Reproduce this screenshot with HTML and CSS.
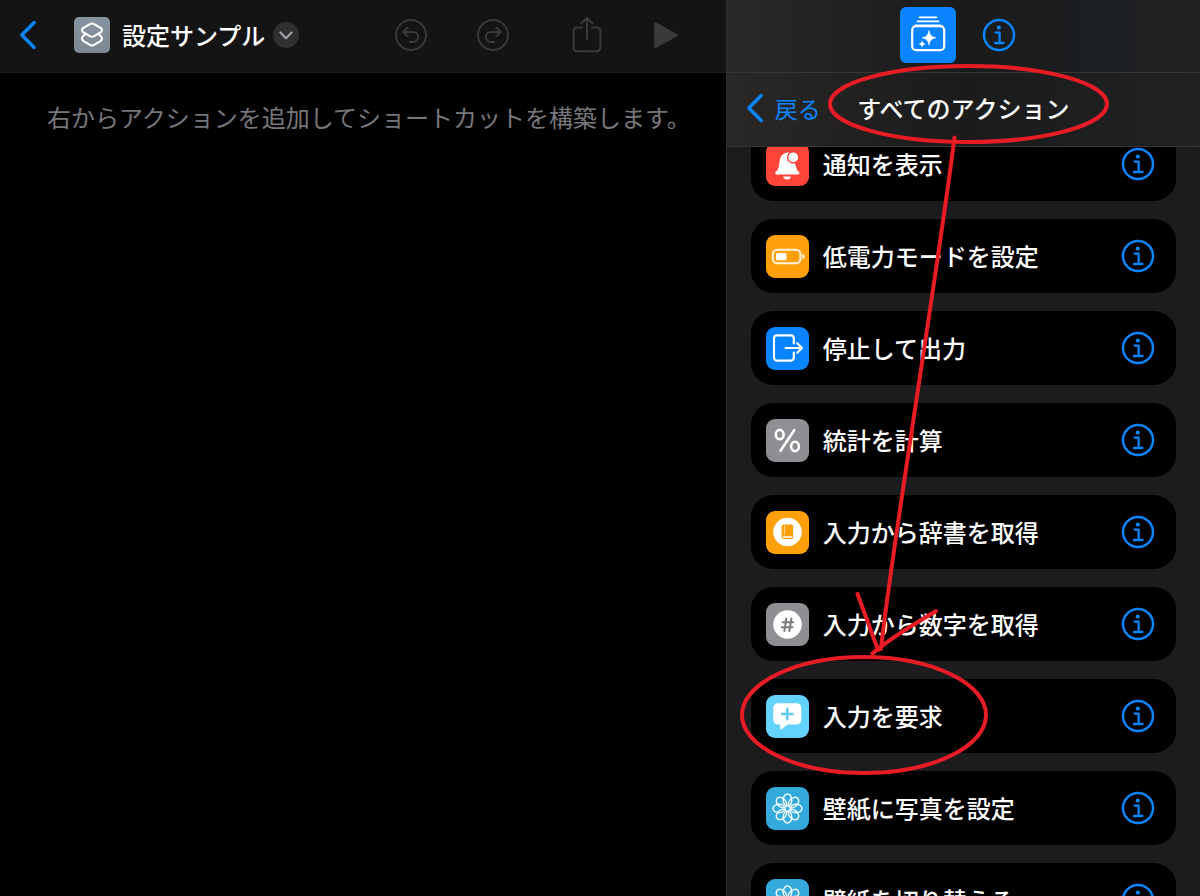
FILE: index.html
```html
<!DOCTYPE html>
<html lang="ja">
<head>
    <meta charset="utf-8">
    <meta name="viewport" content="width=device-width, initial-scale=1">
    <title>設定サンプル</title>
    <link rel="stylesheet" href="styles.css">
</head>
<body>
    <!-- Shared icons -->
    <svg class="sprite" aria-hidden="true">
        <symbol id="icon-info" viewBox="0 0 34 34">
            <circle cx="17" cy="17" r="15" fill="none" stroke="currentColor" stroke-width="2.5"/>
            <circle cx="16.8" cy="9.6" r="2.1" fill="currentColor"/>
            <path d="M13.6 14.6h4v10M12.9 25h8.6" fill="none" stroke="currentColor" stroke-width="2.3" stroke-linecap="round" stroke-linejoin="round"/>
        </symbol>
        <symbol id="icon-back" viewBox="0 0 18 30">
            <path d="M15.2 2.5L2.8 15l12.4 12.5" fill="none" stroke="currentColor" stroke-width="3.4" stroke-linecap="round" stroke-linejoin="round"/>
        </symbol>
        <symbol id="icon-flower" viewBox="0 0 43 43">
            <g fill="none" stroke="#eefaff" stroke-width="1.4">
                <ellipse cx="21.5" cy="13" rx="4.3" ry="6"/>
                <ellipse cx="21.5" cy="13" rx="4.3" ry="6" transform="rotate(45 21.5 21.5)"/>
                <ellipse cx="21.5" cy="13" rx="4.3" ry="6" transform="rotate(90 21.5 21.5)"/>
                <ellipse cx="21.5" cy="13" rx="4.3" ry="6" transform="rotate(135 21.5 21.5)"/>
                <ellipse cx="21.5" cy="13" rx="4.3" ry="6" transform="rotate(180 21.5 21.5)"/>
                <ellipse cx="21.5" cy="13" rx="4.3" ry="6" transform="rotate(225 21.5 21.5)"/>
                <ellipse cx="21.5" cy="13" rx="4.3" ry="6" transform="rotate(270 21.5 21.5)"/>
                <ellipse cx="21.5" cy="13" rx="4.3" ry="6" transform="rotate(315 21.5 21.5)"/>
            </g>
        </symbol>
    </svg>

    <div class="app">
        <main class="editor">
            <header class="editor-bar">
                <button class="icon-button" aria-label="戻る"><svg class="back-icon"><use href="#icon-back"/></svg></button>
                <span class="app-icon">
                    <svg width="36" height="36" viewBox="0 0 36 36" fill="none" stroke="#fff" stroke-width="2.1" stroke-linejoin="round">
                        <path d="M16.4 6.9Q18 6.200 19.600 6.900L26.600 10.900Q29 12.800 27 15.200L19.600 19.400Q18 20.100 16.400 19.400L9 15.200Q7 12.800 9.400 10.900Z"/>
                        <path d="M11.500 17L9 19.200Q7 21.600 9 23.800L16.400 28.100Q18 29 19.600 28.100L27 23.800Q29 21.600 27 19.200L24.500 17"/>
                    </svg>
                </span>
                <h1 class="shortcut-name">設定サンプル</h1>
                <button class="icon-button" aria-label="名前メニュー">
                    <svg width="26" height="26" viewBox="0 0 26 26">
                        <circle cx="13" cy="13" r="13" fill="#303033"/>
                        <path d="M7.4 10.5l5.6 5.8 5.6-5.8" fill="none" stroke="#a2a2a6" stroke-width="2.2" stroke-linecap="round" stroke-linejoin="round"/>
                    </svg>
                </button>
                <div class="tools">
                    <button class="icon-button" aria-label="取り消す" disabled>
                        <svg width="32" height="36" viewBox="0 0 32 36" fill="none" stroke="currentColor" stroke-width="2" stroke-linecap="round" stroke-linejoin="round">
                            <circle cx="16" cy="18" r="15"/>
                            <path d="M12.6 10.7L8.3 15l4.3 4.3M8.8 15h9.3a4.9 4.9 0 0 1 0 9.900h-3"/>
                        </svg>
                    </button>
                    <button class="icon-button" aria-label="やり直す" disabled>
                        <svg width="32" height="36" viewBox="0 0 32 36" fill="none" stroke="currentColor" stroke-width="2" stroke-linecap="round" stroke-linejoin="round">
                            <circle cx="16" cy="18" r="15"/>
                            <path d="M19.4 10.7l4.3 4.3-4.3 4.3M23.2 15h-9.3a4.9 4.9 0 0 0 0 9.9h3"/>
                        </svg>
                    </button>
                    <button class="icon-button share" aria-label="共有" disabled>
                        <svg width="32" height="36" viewBox="0 0 32 36" fill="none" stroke="currentColor" stroke-width="2" stroke-linecap="round" stroke-linejoin="round">
                            <path d="M11 10.5H6a3.4 3.4 0 0 0-3.4 3.4v16.9a3.4 3.4 0 0 0 3.4 3.4h20a3.4 3.4 0 0 0 3.4-3.4V13.9a3.4 3.4 0 0 0-3.4-3.4h-5M16 22V1M10.5 6.3L16 .9l5.5 5.4"/>
                        </svg>
                    </button>
                    <button class="icon-button" aria-label="実行" disabled>
                        <svg width="26" height="36" viewBox="0 0 26 36"><path d="M3 5.200L24.200 17.200Q25.600 18.200 24.200 19.200L3 31Q1.200 31.500 1.200 29.500V6.700Q1.200 4.500 3 5.200Z" fill="currentColor"/></svg>
                    </button>
                </div>
            </header>
            <p class="hint">右からアクションを追加してショートカットを構築します。</p>
        </main>

        <aside class="library">
            <div class="library-tabs">
                <button class="tab-active" aria-label="アクション">
                    <svg width="56" height="56" viewBox="0 0 56 56" fill="none" stroke="#fff">
                        <path d="M19.5 10.3h17M17.5 14.3h21M15.5 18.3h25" stroke-width="1.7" stroke-linecap="round"/>
                        <rect x="12.2" y="19.2" width="32" height="24" rx="4" stroke-width="2.2"/>
                        <path d="M29 23.5Q29.600 29.900 36 30.800Q29.600 31.700 29 38Q28.400 31.700 22 30.800Q28.400 29.900 29 23.500Z" fill="#fff" stroke="#fff" stroke-width=".6"/>
                        <path d="M22 33Q22.400 36.400 26 37Q22.400 37.600 22 41Q21.600 37.600 18.500 37Q21.600 36.400 22 33Z" fill="#fff" stroke="none"/>
                    </svg>
                </button>
                <button class="icon-button" aria-label="ショートカットの詳細"><svg class="info-icon"><use href="#icon-info"/></svg></button>
            </div>
            <div class="library-header">
                <button class="back-button"><svg class="back-icon"><use href="#icon-back"/></svg>戻る</button>
                <h2 class="library-title">すべてのアクション</h2>
            </div>

            <div class="action-scroll">
                <ul class="action-list">
                    <li class="action">
                        <button class="action-main">
                            <svg class="action-icon red" viewBox="0 0 43 43">
                                <path d="M9 30.300Q9 29 11.500 27Q13 25 13.300 20Q14 10.500 21.200 9.500Q24 9.200 26 10.500L31 27Q33.600 29 33.500 30.300Q33.500 31.400 32 31.400H10.500Q9 31.400 9 30.300Z" fill="#fff"/>
                                <circle cx="27.200" cy="14.400" r="6.300" fill="#ff453a"/>
                                <circle cx="27.200" cy="14.400" r="4.900" fill="#fff"/>
                                <path d="M17 33.400h8.200Q24 36.500 21.100 36.500T17 33.400Z" fill="#fff"/>
                            </svg>
                            通知を表示
                        </button>
                        <button class="icon-button" aria-label="通知を表示の情報"><svg class="info-icon"><use href="#icon-info"/></svg></button>
                    </li>
                    <li class="action">
                        <button class="action-main">
                            <svg class="action-icon orange" viewBox="0 0 43 43">
                                <rect x="6.8" y="14.7" width="27.6" height="13.6" rx="4.5" fill="none" stroke="#fff3dc" stroke-width="2"/>
                                <rect x="10" y="18" width="10.5" height="7.2" rx="1.5" fill="#fff"/>
                                <path d="M36.2 18.7q2.5.7 2.5 2.800t-2.500 2.800z" fill="#fff3dc"/>
                            </svg>
                            低電力モードを設定
                        </button>
                        <button class="icon-button" aria-label="低電力モードを設定の情報"><svg class="info-icon"><use href="#icon-info"/></svg></button>
                    </li>
                    <li class="action">
                        <button class="action-main">
                            <svg class="action-icon blue" viewBox="0 0 43 43" fill="none" stroke="#fff" stroke-width="2.1" stroke-linecap="round" stroke-linejoin="round">
                                <path d="M27.8 16.5V11.4a3 3 0 0 0-3-3H11a3 3 0 0 0-3 3v19.2a3 3 0 0 0 3 3h13.8a3 3 0 0 0 3-3v-5.1M19.6 21h16.3M31.2 16.2l4.8 4.8-4.8 4.8"/>
                            </svg>
                            停止して出力
                        </button>
                        <button class="icon-button" aria-label="停止して出力の情報"><svg class="info-icon"><use href="#icon-info"/></svg></button>
                    </li>
                    <li class="action">
                        <button class="action-main">
                            <svg class="action-icon gray" viewBox="0 0 43 43" fill="none" stroke="#fff" stroke-width="2.6" stroke-linecap="round">
                                <ellipse cx="13.7" cy="15.6" rx="3.9" ry="4.7"/>
                                <ellipse cx="29" cy="27.4" rx="3.9" ry="4.7"/>
                                <path d="M28.2 11.2L14.5 31.7"/>
                            </svg>
                            統計を計算
                        </button>
                        <button class="icon-button" aria-label="統計を計算の情報"><svg class="info-icon"><use href="#icon-info"/></svg></button>
                    </li>
                    <li class="action">
                        <button class="action-main">
                            <svg class="action-icon orange" viewBox="0 0 43 43">
                                <circle cx="21.5" cy="21" r="14.3" fill="#fff"/>
                                <path d="M17.6 13.400h8.200q1.300 0 1.300 1.300v11.800q0 1.500-1.500 1.500h-8q-2 0-2-2V15.400q0-2 2-2z" fill="#ff9f0a"/>
                                <path d="M18.400 14.500v9.500" stroke="#ffe0b0" stroke-width=".9"/>
                                <path d="M17.400 26h8.400" stroke="#fff" stroke-width="1.500" stroke-linecap="round"/>
                            </svg>
                            入力から辞書を取得
                        </button>
                        <button class="icon-button" aria-label="入力から辞書を取得の情報"><svg class="info-icon"><use href="#icon-info"/></svg></button>
                    </li>
                    <li class="action">
                        <button class="action-main">
                            <svg class="action-icon gray" viewBox="0 0 43 43">
                                <circle cx="21.5" cy="21.5" r="14.3" fill="#fff"/>
                                <path d="M20.3 15.5l-2 12.500M25.400 15.500l-2 12.500M16.700 19.300h10.600M15.900 24.300h10.600" fill="none" stroke="#7c7c81" stroke-width="2" stroke-linecap="round"/>
                            </svg>
                            入力から数字を取得
                        </button>
                        <button class="icon-button" aria-label="入力から数字を取得の情報"><svg class="info-icon"><use href="#icon-info"/></svg></button>
                    </li>
                    <li class="action">
                        <button class="action-main">
                            <svg class="action-icon cyan" viewBox="0 0 43 43">
                                <path d="M12 8.2h18.5a4.8 4.8 0 0 1 4.8 4.8v11.8a4.8 4.8 0 0 1-4.8 4.8h-9l-5.8 4.7q-1.5.8-1.5-.9v-3.8H12a4.8 4.8 0 0 1-4.8-4.8V13A4.8 4.8 0 0 1 12 8.2z" fill="#fff"/>
                                <path d="M21.3 13.7v10.6M16 19h10.6" stroke="#5cc9f5" stroke-width="2.4" stroke-linecap="round"/>
                            </svg>
                            入力を要求
                        </button>
                        <button class="icon-button" aria-label="入力を要求の情報"><svg class="info-icon"><use href="#icon-info"/></svg></button>
                    </li>
                    <li class="action">
                        <button class="action-main">
                            <svg class="action-icon sky"><use href="#icon-flower"/></svg>
                            壁紙に写真を設定
                        </button>
                        <button class="icon-button" aria-label="壁紙に写真を設定の情報"><svg class="info-icon"><use href="#icon-info"/></svg></button>
                    </li>
                    <li class="action">
                        <button class="action-main">
                            <svg class="action-icon sky"><use href="#icon-flower"/></svg>
                            壁紙を切り替える
                        </button>
                        <button class="icon-button" aria-label="壁紙を切り替えるの情報"><svg class="info-icon"><use href="#icon-info"/></svg></button>
                    </li>
                </ul>
            </div>

            <!-- Red pen marks over the panel -->
            <svg class="annotation" width="474" height="896" viewBox="726 0 474 896" aria-hidden="true">
                <ellipse cx="968.5" cy="104" rx="138.5" ry="38"/>
                <ellipse cx="864" cy="715" rx="122" ry="58"/>
                <path d="M954.5 137.5C938 270 890 560 881 649M857.5 594L878 650M936 611C915 624 890 638 872.5 653.5"/>
            </svg>
        </aside>
    </div>
</body>
</html>
```

FILE: styles.css
```css
* {
    box-sizing: border-box;
}

body {
    margin: 0;
    background-color: #000;
    color: #fff;
    font-family: "Noto Sans CJK JP", sans-serif;
    font-size: 24px;
    line-height: 36px;
}

h1, h2, p, ul {
    margin: 0;
    padding: 0;
}

button {
    padding: 0;
    border: none;
    background: none;
    color: inherit;
    font: inherit;
    cursor: pointer;
}

svg {
    display: block;
    flex-shrink: 0;
}

.sprite {
    position: absolute;
    width: 0;
    height: 0;
}

.app {
    display: grid;
    grid-template-columns: 153fr 100fr;
    height: 100vh;
    overflow: hidden;
}

.icon-button {
    display: flex;
    color: #0a84ff;
}

.back-icon {
    width: 18px;
    height: 30px;
}

.info-icon {
    width: 34px;
    height: 34px;
}

/* Left side */
.editor {
    min-width: 0;
}

.editor-bar {
    display: flex;
    align-items: center;
    height: 73px;
    padding: 0 47px 2px 19px;
    background-color: #141414;
    border-bottom: 1px solid #1e1e1e;
}

.app-icon {
    margin: 0 12px 0 37px;
    border-radius: 5px;
    background: linear-gradient(#8795a1, #7f8790);
}

.shortcut-name {
    margin-right: 8px;
    font-size: 24px;
    font-weight: 500;
    white-space: nowrap;
}

.tools {
    display: flex;
    gap: 50px;
    margin-left: auto;
}

.tools .icon-button {
    color: #3a3a3a;
    cursor: default;
}

.tools .share {
    margin-left: 12px;
}

.hint {
    padding: 26px 0 26px 12px;
    color: #77777b;
    font-weight: 400;
    text-align: center;
    white-space: nowrap;
}

/* Right side */
.library {
    position: relative;
    display: flex;
    flex-direction: column;
    min-width: 0;
    min-height: 0;
    border-left: 1px solid #2e2e30;
    background-color: #1c1c1e;
}

.library-tabs {
    display: flex;
    align-items: center;
    justify-content: center;
    gap: 26px;
    height: 73px;
    padding: 0 10px 3px 0;
    border-bottom: 1px solid #363638;
    background: linear-gradient(90deg, #292929, #1a1a1a 50%, #1c1f22 80%, #222);
}

.tab-active {
    border-radius: 6px;
    background-color: #0a84ff;
}

.library-header {
    display: grid;
    grid-template-columns: 1fr auto 1fr;
    align-items: center;
    height: 74px;
    padding: 0 19px 3px;
    border-bottom: 1px solid #363638;
    background: linear-gradient(90deg, #2a2827, #1b1b1b 50%, #1d1f21 80%, #222);
}

.back-button {
    display: flex;
    align-items: center;
    gap: 11px;
    color: #0a84ff;
    font-size: 23px;
    font-weight: 400;
}

.library-title {
    font-size: 24px;
    font-weight: 500;
}

.action-scroll {
    flex: 1;
    min-height: 0;
    overflow: hidden;
}

.action-list {
    display: flex;
    flex-direction: column;
    gap: 18px;
    /* list is scrolled a little under the header */
    margin-top: -20px;
    padding: 0 24px;
    list-style: none;
}

.action {
    display: flex;
    align-items: center;
    height: 74px;
    padding: 0 21px 0 15px;
    border-radius: 22px;
    background-color: #000;
}

.action-main {
    display: flex;
    flex: 1;
    align-items: center;
    gap: 14px;
    line-height: 40px;
    font-weight: 500;
    text-align: left;
    white-space: nowrap;
}

.action-icon {
    width: 43px;
    height: 43px;
    border-radius: 9px;
}

.red { background-color: #ff453a; }
.orange { background-color: #ff9f0a; }
.blue { background-color: #0a84ff; }
.gray { background-color: #8e8e93; }
.cyan { background-color: #64d2ff; }
.sky { background-color: #34aadc; }

.annotation {
    position: absolute;
    top: 0;
    left: -1px;
    fill: none;
    stroke: #e81c24;
    stroke-width: 4;
    stroke-linecap: round;
    pointer-events: none;
}
```
